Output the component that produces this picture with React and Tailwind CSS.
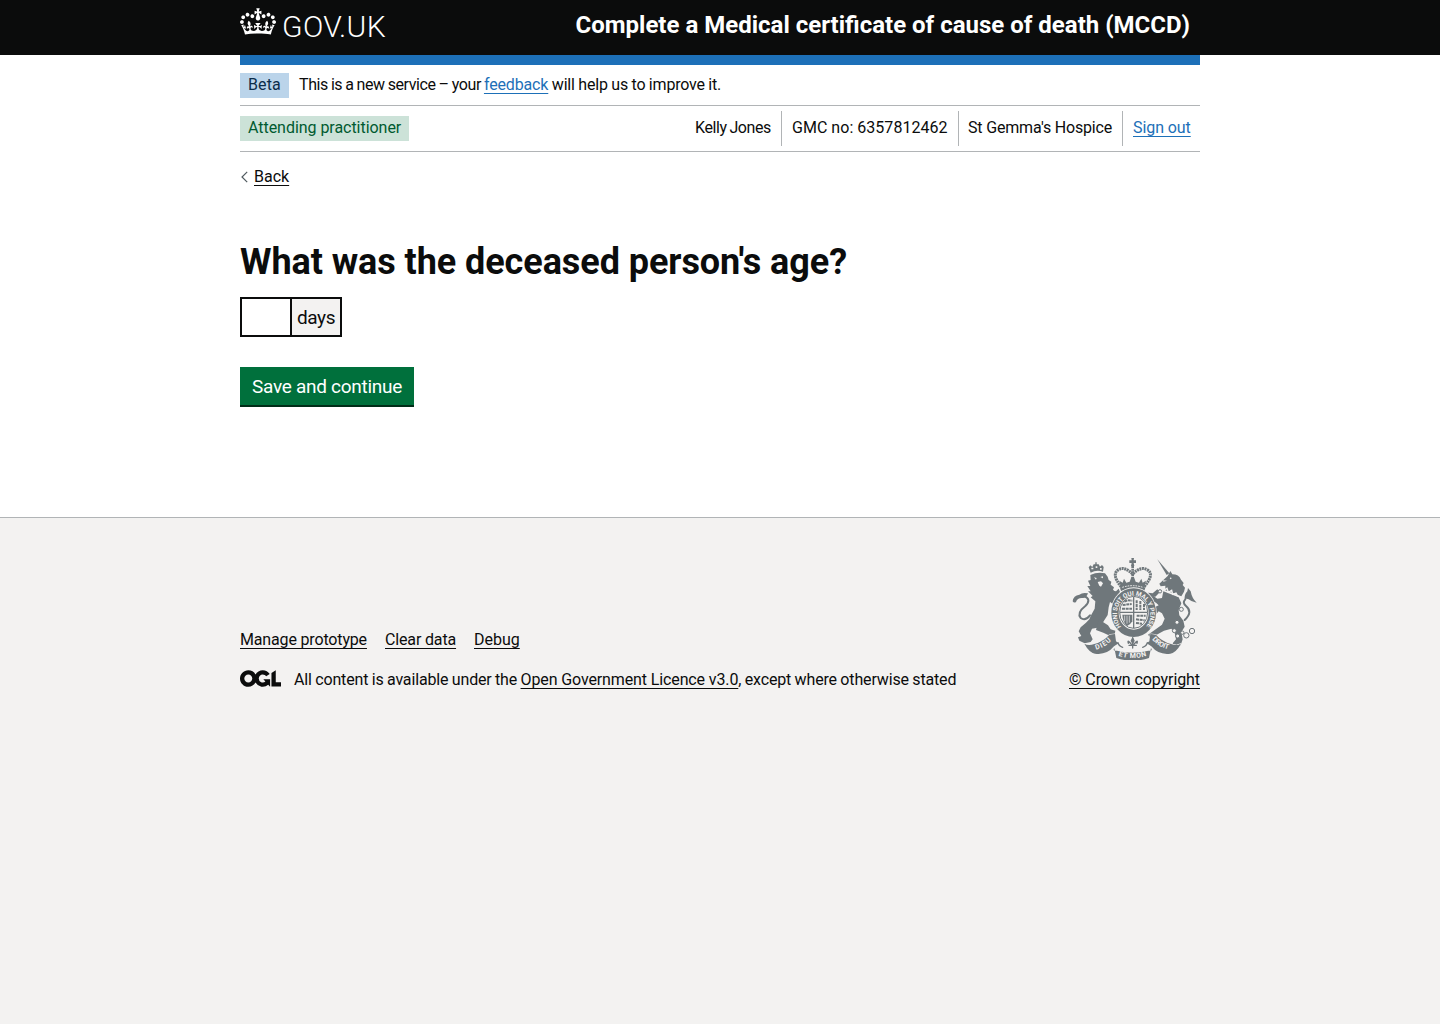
import React from 'react';

const link = 'underline decoration-1 underline-offset-[3px]';

function Crown() {
  return (
    <svg viewBox="0 0 132 97" width="36" height="27" fill="currentColor" aria-hidden="true">
      <path fillRule="evenodd" d="M25 30.2c3.5 1.5 7.7-.2 9.1-3.7 1.5-3.6-.2-7.8-3.9-9.2-3.6-1.4-7.6.3-9.1 3.9-1.4 3.5.3 7.5 3.9 9zM9 39.5c3.6 1.5 7.8-.2 9.2-3.7 1.5-3.6-.2-7.8-3.9-9.1-3.6-1.5-7.6.2-9.1 3.8-1.4 3.5.3 7.5 3.8 9zM4.4 57.2c3.5 1.5 7.7-.2 9.1-3.8 1.5-3.6-.2-7.7-3.9-9.1-3.5-1.5-7.6.3-9.1 3.8-1.4 3.5.3 7.6 3.9 9.1zm38.3-21.4c3.5 1.5 7.7-.2 9.1-3.8 1.5-3.6-.2-7.7-3.9-9.1-3.6-1.5-7.6.3-9.1 3.8-1.3 3.6.4 7.7 3.9 9.1zm64.4-5.6c-3.6 1.5-7.8-.2-9.1-3.7-1.5-3.6.2-7.8 3.8-9.2 3.6-1.4 7.7.3 9.2 3.9 1.3 3.5-.4 7.5-3.9 9zm15.9 9.3c-3.6 1.5-7.7-.2-9.1-3.7-1.5-3.6.2-7.8 3.7-9.1 3.6-1.5 7.7.2 9.2 3.8 1.5 3.5-.3 7.5-3.8 9zm4.7 17.7c-3.6 1.5-7.8-.2-9.2-3.8-1.5-3.6.2-7.7 3.9-9.1 3.6-1.5 7.7.3 9.2 3.8 1.3 3.5-.4 7.6-3.9 9.1zM89.3 35.8c-3.6 1.5-7.8-.2-9.2-3.8-1.4-3.6.2-7.7 3.9-9.1 3.6-1.5 7.7.3 9.2 3.8 1.4 3.6-.3 7.7-3.9 9.1zM69.7 17.7l8.9 4.7V9.3l-8.9 2.8c-.2-.3-.5-.6-.9-.9L72.4 0H59.6l3.5 11.2c-.3.3-.6.5-.9.9l-8.8-2.8v13.1l8.8-4.7c.3.3.6.7.9.9l-5 15.4v.1c-.2.8-.4 1.6-.4 2.4 0 4.1 3.1 7.5 7 8.1h.2c.3 0 .7.1 1 .1.4 0 .7 0 1-.1h.2c4-.6 7.1-4.1 7.1-8.1 0-.8-.1-1.7-.4-2.4V34l-5.1-15.4c.4-.2.7-.6 1-.9zM66 92.8c16.9 0 32.8 1.1 47.1 3.2 4-16.9 8.9-26.7 14-33.5l-9.6-3.4c1 4.9 1.1 7.2 0 10.2-1.5-1.4-3-4.3-4.2-8.7L108.6 76c2.8-2 5-3.2 7.5-3.3-4.4 9.4-10 11.9-13.6 11.2-4.3-.8-6.3-4.6-5.6-7.9 1-4.7 5.7-5.9 8-.5 4.3-8.7-3-11.4-7.6-8.8 7.1-7.2 7.9-13.5 2.1-21.1-8 6.1-8.1 12.3-4.5 20.8-4.7-5.4-12.1-2.5-9.5 6.2 3.4-5.2 7.9-2 7.2 3.1-.6 4.3-6.4 7.8-13.5 7.2-10.3-.9-10.9-8-11.2-13.8 2.5-.5 7.1 1.8 11 7.3L80.2 60c-4.1 4.4-8 5.3-12.3 5.4 1.4-4.4 8-11.6 8-11.6H55.5s6.4 7.2 7.9 11.6c-4.2-.1-8-1-12.3-5.4l1.4 16.4c3.9-5.5 8.5-7.7 10.9-7.3-.3 5.8-.9 12.8-11.1 13.8-7.2.6-12.9-2.9-13.5-7.2-.7-5 3.8-8.3 7.1-3.1 2.7-8.7-4.6-11.6-9.4-6.2 3.7-8.5 3.6-14.7-4.6-20.8-5.8 7.6-5 13.9 2.2 21.1-4.7-2.6-11.9.1-7.7 8.8 2.3-5.5 7.1-4.2 8.1.5.7 3.3-1.3 7.1-5.7 7.9-3.5.7-9-1.8-13.5-11.2 2.5.1 4.7 1.3 7.5 3.3l-4.7-15.4c-1.2 4.4-2.7 7.2-4.3 8.7-1.1-3-.9-5.3 0-10.2l-9.5 3.4c5 6.9 9.9 16.7 14 33.5 14.8-2.1 30.8-3.2 47.7-3.2z" />
    </svg>
  );
}

function OglLogo() {
  return (
    <svg viewBox="0 0 483.2 195.7" width="41" height="17" fill="currentColor" aria-hidden="true">
      <path d="M421.5 142.8V.1l-50.7 32.3v161.1h112.4v-50.7zm-122.3-9.6A47.12 47.12 0 0 1 221 97.8c0-26 21.1-47.1 47.1-47.1 16.7 0 31.4 8.7 39.7 21.8l42.7-27.2A97.63 97.63 0 0 0 268.1 0c-36.5 0-68.3 20.1-85.1 49.7A98 98 0 0 0 97.8 0C43.9 0 0 43.9 0 97.8s43.9 97.8 97.8 97.8c36.5 0 68.3-20.1 85.1-49.7a97.76 97.76 0 0 0 149.6 25.4l19.4 22.2h3v-87.8h-80l24.3 27.5zM97.8 145c-26 0-47.1-21.1-47.1-47.1s21.1-47.1 47.1-47.1 47.1 21.1 47.1 47.1S123.8 145 97.8 145" />
    </svg>
  );
}

function RoyalArms() {
  const ink = '#6f777b';
  const paper = '#f3f2f1';
  return (
    <svg viewBox="36 24 375 306" width="125" height="102" aria-hidden="true" fontFamily="Roboto, sans-serif" fontWeight="700">
      <g fill={ink}>
        {/* lion: crown, mane, body, legs */}
        <path d="M92 68 L86 52 l5 -6 l6 5 l4 -8 h5 v-6 h4 v6 h6 l4 7 l6 -5 l5 6 l-2 14 q-20 -6 -37 3z" />
        <path d="M91 75 Q113 64 135 70 L143 80 L146 90 L154 95 L152 104 L162 112 L159 119 L168 128 L162 134 L170 144 L164 166 L150 156 L146 172 L143 195 L132 212 L120 232 L96 236 L90 250 L98 268 L92 276 L74 280 L58 272 L54 262 L64 258 L56 244 L62 232 L78 218 L88 208 L94 194 L104 176 L106 154 L92 142 L98 138 L84 124 L92 124 L82 108 L91 108 L84 92 L92 90 Z" />
        <path d="M116 208 L144 226 L152 238 L166 242 L164 254 L146 256 L130 248 L108 240 Z" />
        <path d="M150 120 L168 124 L176 116 L180 126 L170 140 L154 142 Z" />
        <path d="M38 154 q2 -18 20 -20 q10 -8 26 -4 q-4 12 -14 14 q-18 -2 -22 12 q-6 4 -10 -2z" />
        {/* unicorn: horn, head, mane, body, legs */}
        <path d="M292 28 l36 42 l-8 5z" />
        <path d="M323 78 l8 -15 l6 10 q20 0 26 16 l8 10 l-3 6 l7 8 l-3 12 l-8 14 l-26 -10 l-22 -8 l0 -14 l-14 2 l-4 -8z" />
        <path d="M310 124 L356 142 L364 160 L356 180 L358 196 L370 212 L374 230 L364 246 L368 268 L362 286 L344 290 L338 280 L348 268 L344 248 L334 236 L312 242 L290 254 L272 264 L264 254 L284 240 L306 224 L314 206 L306 190 L296 184 L284 198 L275 190 L284 172 L296 166 L288 158 L276 152 L266 142 L280 138 L292 146 L306 144 Z" />
        <path d="M264 128 l14 2 l14 -12 l8 8 l-14 14 l-18 0z" />
        <path d="M374 150 q-2 -16 8 -26 l2 -10 l8 10 q4 22 18 34 q-16 -2 -24 -10 q-8 -4 -12 2z" />
      </g>
      <g fill="none" stroke={ink} strokeWidth="6" strokeLinecap="round">
        <path d="M72 138 q24 10 4 30 q-26 20 -14 36 q14 10 28 -8" />
        <path d="M376 148 q-10 10 2 20 q22 18 -4 42" />
      </g>
      <g fill={paper}>
        <path d="M102 82 l8 2 l-2 5z M121 81 l8 -2 l0 6z M113 96 l10 -2 l6 6 l-6 10 l-5 -3z" />
        <circle cx="332" cy="85" r="2.5" />
        <path d="M309 91 l12 1 l-11 3z" />
        <path d="M94 53 h6 v5 h-6z M107 49 h5 v5 h-5z M120 54 h5 v5 h-5z" />
      </g>
      <path d="M303 112 l10 8 l8 -5 l4 12 l10 -6 l3 12 l10 -4 l5 10" fill="none" stroke={paper} strokeWidth="4" />
      {/* chain */}
      <g fill={paper} stroke={ink} strokeWidth="3">
        <circle cx="300" cy="124" r="5" />
        <circle cx="364" cy="178" r="6" />
        <circle cx="351" cy="217" r="6" />
        <circle cx="343" cy="242" r="6" />
        <circle cx="353" cy="258" r="6" />
        <circle cx="367" cy="248" r="5" />
        <circle cx="379" cy="256" r="8" />
        <circle cx="396" cy="243" r="8" />
      </g>
      {/* central crown */}
      <path d="M184 111 Q151 70 178 58 Q194 49 218 72 Q242 49 259 58 Q287 70 252 111" fill="none" stroke={ink} strokeWidth="9" strokeDasharray="6 1.8" />
      <path d="M218 48 V90" stroke={ink} strokeWidth="8" strokeDasharray="6 2" />
      <g fill={ink}>
        <path d="M214 24 h8 l-1 7 h7 v8 h-7 l2 9 h-10 l2 -9 h-7 v-8 h7z" />
        <path d="M178 92 l10 6 l4 -12 l7 12 l10 -3 l5 -13 h8 l5 13 l10 3 l7 -12 l4 12 l10 -6 l-5 22 q-36 -12 -70 0z" />
        <path d="M180 113 q38 -14 76 0 l-3 10 q-35 -12 -70 0z" />
      </g>
      <path d="M187 112 q31 -10 62 0" fill="none" stroke={paper} strokeWidth="3" strokeDasharray="5 3" />
      {/* garter and quartered shield */}
      <ellipse cx="221" cy="188" rx="69" ry="76" fill={paper} />
      <ellipse cx="221" cy="188" rx="56" ry="62" fill="none" stroke={ink} strokeWidth="22" />
      <ellipse cx="221" cy="187" rx="42" ry="48" fill={paper} stroke={ink} strokeWidth="3" />
      <path d="M221 140 V234 M180 187 H262" stroke={ink} strokeWidth="4" />
      <g fill="none" stroke={ink} strokeWidth="6" strokeDasharray="9 2">
        <path d="M193 155 l10 -4 l14 1 M188 165 l27 -3 M186 176 l30 0 M230 197 l27 0 M228 208 l26 3 M228 219 l18 2" />
        <path d="M230 151 v29 M241 153 v27 M252 162 v18" />
      </g>
      <path d="M187 194 h30 v20 q-7 12 -16 14 q-13 -11 -14 -34z" fill={ink} />
      <path d="M194 197 v17 M201 197 v24 M208 197 v21" stroke={paper} strokeWidth="2" />
      <defs>
        <path id="garter" d="M184 230 A50 56 0 1 1 258 230" />
        <path id="scrollLeft" d="M108 299 Q139 291 158 267" />
        <path id="scrollMiddle" d="M175 317 Q218 332 262 317" />
        <path id="scrollRight" d="M276 268 Q297 293 330 299" />
      </defs>
      <text fill={paper} fontSize="19"><textPath href="#garter" textLength="246">HONI SOIT QUI MAL Y PENSE</textPath></text>
      {/* motto scroll */}
      <g fill={ink} stroke={paper} strokeWidth="3" paintOrder="stroke">
        <path d="M73 281 q12 8 30 1 q28 -8 45 -28 l17 -2 l3 22 l8 6 l-14 9 q-22 27 -57 22 q-18 -4 -32 -30z" />
        <path d="M363 281 q-12 8 -30 1 q-28 -8 -45 -28 l-17 -2 l-3 22 l-8 6 l14 9 q22 27 57 22 q18 -4 32 -30z" />
        <path d="M163 294 q-7 10 8 8 q47 12 94 0 q15 2 8 -8 l-6 30 q-49 16 -98 0z" />
      </g>
      <g fill={paper} fontSize="21">
        <text><textPath href="#scrollLeft" textLength="54">DIEU</textPath></text>
        <text><textPath href="#scrollMiddle" textLength="86">ET MON</textPath></text>
        <text><textPath href="#scrollRight" textLength="58">DROIT</textPath></text>
      </g>
      <g fill="none" stroke={ink} strokeWidth="4" strokeLinecap="round">
        <path d="M218 264 v30 M207 286 h22 M215 284 q-14 -18 -10 -4 M221 284 q14 -18 10 -4" />
        <path d="M218 264 l-4 8 l4 8 l4 -8z" fill={ink} />
        <path d="M188 292 q-12 -4 -14 -14 M248 292 q12 -4 14 -14" strokeWidth="4" />
      </g>
    </svg>
  );
}

function Header() {
  return (
    <header className="h-[55px] bg-[#0b0c0c] text-white">
      <div className="mx-auto flex h-full w-[960px] justify-between">
        <a className="flex pt-2">
          <Crown />
          <span className="ml-[6px] mt-[3px] text-[30px] leading-[31px] tracking-[0.4px] [font-weight:350]">GOV.UK</span>
        </a>
        <span className="mr-[10px] pt-[10px] text-2xl font-bold leading-[30px] whitespace-nowrap">Complete a Medical certificate of cause of death (MCCD)</span>
      </div>
    </header>
  );
}

function UserBar() {
  return (
    <div className="flex h-[46px] items-start justify-between border-b border-[#b1b4b6] pt-[5px]">
      <strong className="mt-[5px] flex h-[25px] w-[169px] items-center bg-[#cce2d8] pb-px pl-2 font-normal tracking-[-0.04px] text-[#005a30]">Attending practitioner</strong>
      <ul className="flex h-[35px] leading-[34px] whitespace-nowrap">
        <li className="w-[87px] border-r border-[#b1b4b6] tracking-[-0.4px] [word-spacing:-0.8px]">Kelly Jones</li>
        <li className="w-[177px] border-r border-[#b1b4b6] pl-[10px] tracking-[0.03px]">GMC no: 6357812462</li>
        <li className="w-[164px] border-r border-[#b1b4b6] pl-[9px] tracking-[-0.18px]">St Gemma's Hospice</li>
        <li className="w-[77px] pl-[10px]"><a className={`${link} tracking-[-0.08px] text-[#1d70b8]`}>Sign out</a></li>
      </ul>
    </div>
  );
}

function Footer() {
  return (
    <footer className="grow border-t border-[#b1b4b6] bg-[#f3f2f1] pt-10">
      <div className="mx-auto flex w-[960px] items-end justify-between whitespace-nowrap">
        <div>
          <nav className="mb-5 flex gap-[18px] leading-5">
            <a className={`${link} w-[127px] tracking-[-0.16px]`}>Manage prototype</a>
            <a className={`${link} w-[71px] tracking-[-0.15px]`}>Clear data</a>
            <a className={link}>Debug</a>
          </nav>
          <div className="flex h-5 leading-5">
            <OglLogo />
            <p className="ml-[13px]">
              <span className="tracking-[-0.15px] [word-spacing:-0.4px]">All content is available under the </span>
              <a className={`${link} tracking-[-0.12px]`}>Open Government Licence v3.0</a>
              <span className="tracking-[-0.15px] [word-spacing:-0.4px]">, except where otherwise stated</span>
            </p>
          </div>
        </div>
        <div className="flex w-[131px] flex-col items-center">
          <RoyalArms />
          <a className={`${link} mt-[10px] leading-5 tracking-[-0.09px]`}>© Crown copyright</a>
        </div>
      </div>
    </footer>
  );
}

export default function App() {
  return (
    <div className="flex min-h-screen flex-col bg-white font-[Roboto,sans-serif] text-base text-[#0b0c0c]">
      <Header />
      <div className="mx-auto h-[462px] w-[960px]">
        <div className="h-[10px] bg-[#1d70b8]" />
        <div className="flex h-[41px] items-start border-b border-[#b1b4b6] pt-2">
          <strong className="flex h-[25px] w-[49px] items-center bg-[#bbd4ea] pb-px pl-2 font-normal tracking-[0.1px] text-[#0c2d4a]">Beta</strong>
          <p className="ml-[10px] leading-[24px]">
            <span className="tracking-[-0.42px] [word-spacing:-0.5px]">This is a new service – your </span>
            <a className={`${link} tracking-[-0.15px] text-[#1d70b8]`}>feedback</a>
            <span className="tracking-[-0.2px] [word-spacing:-0.2px]"> will help us to improve it.</span>
          </p>
        </div>
        <UserBar />
        <a className="mt-[15px] flex h-5 items-center leading-5">
          <svg width="14" height="14" viewBox="0 0 14 14" fill="none" stroke="#505a5f" strokeWidth="1.2" aria-hidden="true"><path d="M7.2 1.8L2 7l5.2 5.2" /></svg>
          <span className={link}>Back</span>
        </a>
        <main className="pt-[55px]">
          <h1 className="text-4xl font-bold leading-10 tracking-[-0.07px]">What was the deceased person's age?</h1>
          <div className="mt-[15px] flex h-10 text-[19px]">
            <input aria-label="Age in days" className="w-[52px] border-2 border-[#0b0c0c] bg-white" />
            <span className="-ml-0.5 flex w-[52px] items-center justify-center border-2 border-[#0b0c0c] bg-[#f3f2f1] pt-0.5 tracking-[-0.4px]">days</span>
          </div>
          <button className="mt-[30px] flex h-[38px] w-[174px] items-center justify-center bg-[#00703c] pt-0.5 text-[19px] tracking-[-0.28px] text-white shadow-[0_2px_0_#002d18]">Save and continue</button>
        </main>
      </div>
      <Footer />
    </div>
  );
}
